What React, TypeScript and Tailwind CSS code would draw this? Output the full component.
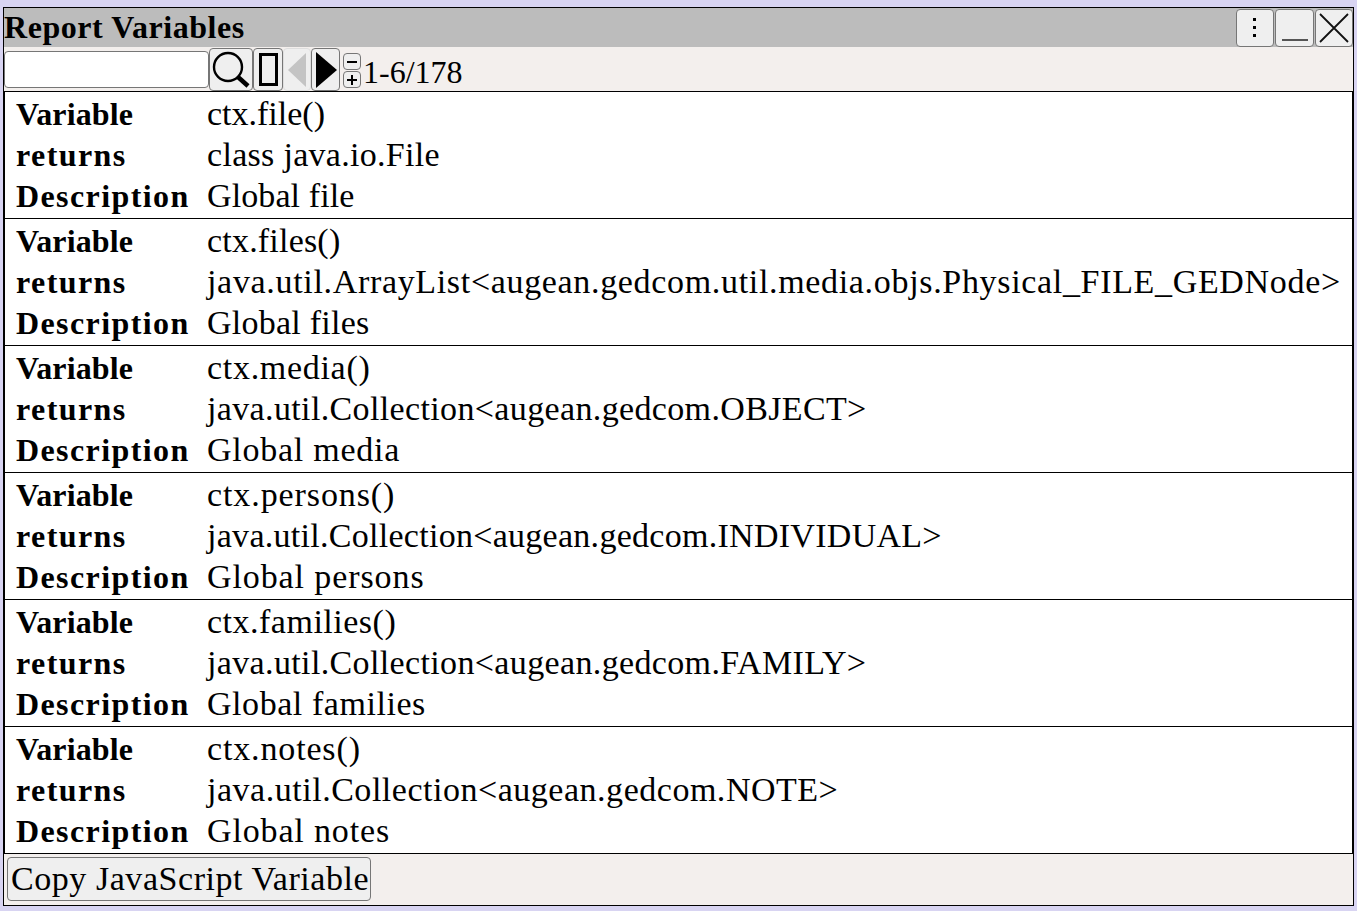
const rows = [
  { v: "ctx.file()", r: "class java.io.File", d: "Global file", tv: "tracking-[0px]", tr: "tracking-[0.3px]", td: "tracking-[0.1px]" },
  { v: "ctx.files()", r: "java.util.ArrayList<augean.gedcom.util.media.objs.Physical_FILE_GEDNode>", d: "Global files", tv: "tracking-[0.2px]", tr: "tracking-[0.67px]", td: "tracking-[0.25px]" },
  { v: "ctx.media()", r: "java.util.Collection<augean.gedcom.OBJECT>", d: "Global media", tv: "tracking-[0.7px]", tr: "tracking-[0.36px]", td: "tracking-[0.75px]" },
  { v: "ctx.persons()", r: "java.util.Collection<augean.gedcom.INDIVIDUAL>", d: "Global persons", tv: "tracking-[0.9px]", tr: "tracking-[0.28px]", td: "tracking-[0.9px]" },
  { v: "ctx.families()", r: "java.util.Collection<augean.gedcom.FAMILY>", d: "Global families", tv: "tracking-[0.5px]", tr: "tracking-[0.36px]", td: "tracking-[0.55px]" },
  { v: "ctx.notes()", r: "java.util.Collection<augean.gedcom.NOTE>", d: "Global notes", tv: "tracking-[0.85px]", tr: "tracking-[0.52px]", td: "tracking-[0.85px]" },
];

const btn = "flex items-center justify-center rounded-[4px] border border-[#767676] bg-[#efefef]";

function Line({ label, value, lc, vc }: { label: string; value: string; lc: string; vc: string }) {
  return (
    <div className="flex h-[41px] items-center whitespace-nowrap">
      <div className={`w-[191px] shrink-0 text-[32px] font-bold ${lc}`}>{label}</div>
      <div className={`text-[34px] ${vc}`}>{value}</div>
    </div>
  );
}

export default function App() {
  return (
    <div className="h-[911px] overflow-hidden bg-[#d8d4f2] pl-[3px] pr-[3px] pt-[7px] text-[32px] leading-[38px] text-black [font-family:'Liberation_Serif',serif]">
      <div className="h-[899px] border border-black bg-[#f3efed]">
        <div className="flex h-[39px] items-center justify-between bg-[#bcbcbc]">
          <div className="pb-[2px] font-bold tracking-[0.55px]">Report Variables</div>
          <div className="flex h-[38px] gap-px">
            <button className={`${btn} w-[38px]`}>
              <svg width="6" height="22" viewBox="0 0 6 22"><rect x="1" y="1" width="3" height="3" /><rect x="1" y="9" width="3" height="3" /><rect x="1" y="17" width="3" height="3" /></svg>
            </button>
            <button className={`${btn} w-[39px]`}>
              <svg width="30" height="30" viewBox="0 0 30 30"><path d="M2 27H28" stroke="#222" strokeWidth="1.5" /></svg>
            </button>
            <button className={`${btn} w-[38px]`}>
              <svg width="32" height="32" viewBox="0 0 32 32"><path d="M2 2L30 30M30 2L2 30" stroke="#111" strokeWidth="1.8" /></svg>
            </button>
          </div>
        </div>
        <div className="flex h-[44px] items-start">
          <div className="mt-[4px] h-[37px] w-[205px] rounded-[4px] border border-[#767676] bg-white" />
          <button className={`${btn} mt-[1px] h-[43px] w-[44px] shrink-0`}>
            <svg width="38" height="38" viewBox="0 0 38 38" fill="none" stroke="#000">
              <circle cx="16" cy="16" r="14" strokeWidth="2.4" />
              <path d="M26 26L36 35" strokeWidth="4.5" />
            </svg>
          </button>
          <button className={`${btn} mt-[1px] h-[43px] w-[30px] shrink-0`}>
            <span className="block h-[33px] w-[19px] border-[3px] border-black" />
          </button>
          <button className={`${btn} mt-[1px] h-[43px] w-[28px] shrink-0 border-[#dedede]`}>
            <svg width="20" height="34" viewBox="0 0 20 34"><path d="M19 0V34L1 17Z" fill="#c4c4c4" /></svg>
          </button>
          <button className={`${btn} mt-[1px] h-[43px] w-[29px] shrink-0`}>
            <svg width="22" height="36" viewBox="0 0 22 36"><path d="M1 0V36L22 18Z" fill="#000" /></svg>
          </button>
          <div className="ml-[3px] mt-[6px] flex w-[18px] shrink-0 flex-col gap-px">
            <button className={`${btn} h-[17px] w-[18px]`}><svg width="12" height="12" viewBox="0 0 12 12"><path d="M1 6H11" stroke="#000" strokeWidth="2" /></svg></button>
            <button className={`${btn} h-[17px] w-[18px]`}><svg width="12" height="12" viewBox="0 0 12 12"><path d="M1 6H11M6 1V11" stroke="#000" strokeWidth="2" /></svg></button>
          </div>
          <div className="ml-[2px] mt-[6px]">1-6/178</div>
        </div>
        <div className="border-x border-t border-black bg-white">
          {rows.map((r, i) => (
            <div key={r.v} className={`pl-[11px] pt-[1px] pb-[2px] ${i > 0 ? "border-t border-black" : ""}`}>
              <Line label="Variable" value={r.v} lc="tracking-[0.1px]" vc={r.tv} />
              <Line label="returns" value={r.r} lc="tracking-[1.4px]" vc={r.tr} />
              <Line label="Description" value={r.d} lc="tracking-[1.4px]" vc={r.td} />
            </div>
          ))}
        </div>
        <div className="border-t border-black pl-[3px] pt-[3px]">
          <button className={`${btn} h-[44px] w-[364px] justify-start whitespace-nowrap pl-[3px] text-[34px] tracking-[0.55px]`}>Copy JavaScript Variable</button>
        </div>
      </div>
    </div>
  );
}
